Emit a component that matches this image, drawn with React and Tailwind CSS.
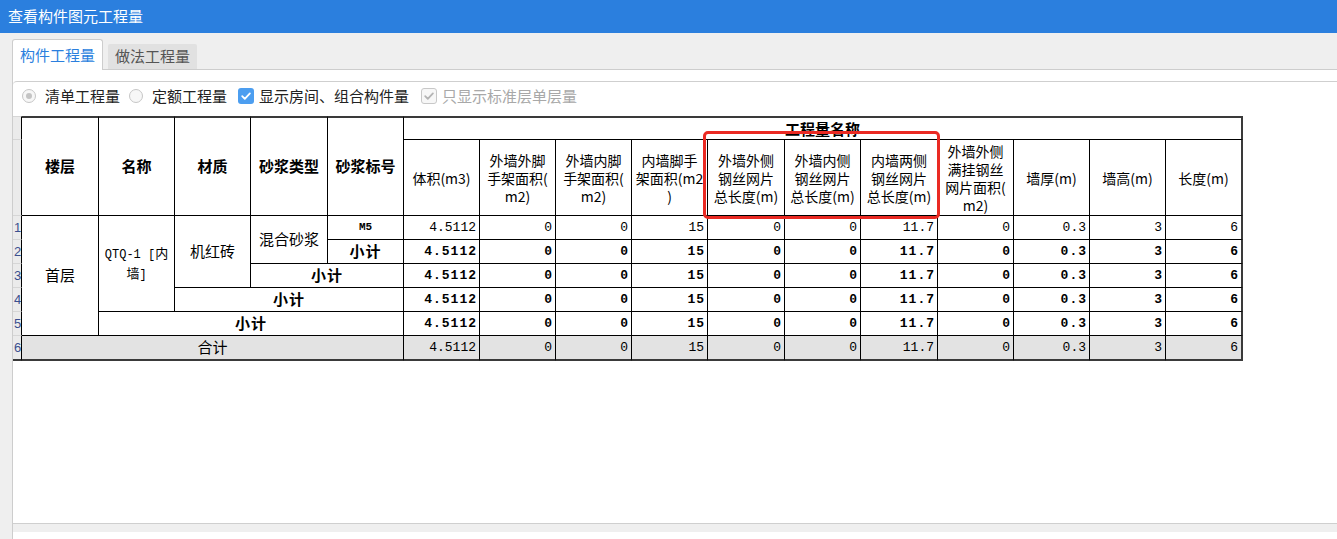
import clsx from "clsx";

const widths = [77, 76, 76, 77, 76, 76, 76, 76, 76, 77, 76, 77, 76, 76, 76, 76];

const values = ["4.5112", "0", "0", "15", "0", "0", "11.7", "0", "0.3", "3", "6"];

const subHeaders = [
  ["体积(m3)"],
  ["外墙外脚", "手架面积(", "m2)"],
  ["外墙内脚", "手架面积(", "m2)"],
  ["内墙脚手", "架面积(m2", ")"],
  ["外墙外侧", "钢丝网片", "总长度(m)"],
  ["外墙内侧", "钢丝网片", "总长度(m)"],
  ["内墙两侧", "钢丝网片", "总长度(m)"],
  ["外墙外侧", "满挂钢丝", "网片面积(", "m2)"],
  ["墙厚(m)"],
  ["墙高(m)"],
  ["长度(m)"],
];

const cell = "border-r border-b border-black p-0 align-middle";
const rnCell =
  "border-r border-b border-r-black border-b-[#d6d6d6] bg-[#ebebeb] p-0 pl-[1px] text-left align-middle text-[13px] leading-none text-[#3a4f8f] font-['Liberation_Sans',sans-serif]";

function Values({ bold }) {
  return values.map((v, i) => (
    <td
      key={i}
      className={clsx(
        cell,
        "text-right font-['Liberation_Mono',monospace] text-[13px] leading-none",
        bold ? "font-bold tracking-[1px] pr-[2px]" : "pr-[3px]",
        i === 10 && "border-r-2 border-r-[#3a3a3a]"
      )}
    >
      {v}
    </td>
  ));
}

function Radio({ checked }) {
  return (
    <span className="flex h-[14px] w-[14px] items-center justify-center rounded-full border border-[#c6c6c6] bg-[#f7f7f7]">
      {checked && <span className="h-[6px] w-[6px] rounded-full bg-[#c4c4c4]" />}
    </span>
  );
}

function Checkbox({ disabled }) {
  return (
    <span
      className={clsx(
        "flex h-[16px] w-[16px] items-center justify-center rounded-[3px]",
        disabled ? "border border-[#c8c8c8] bg-[#f7f7f7]" : "bg-[#4c9ef0]"
      )}
    >
      <svg width="12" height="12" viewBox="0 0 12 12" fill="none">
        <path
          d="M2.2 6.2l2.6 2.6L9.9 3.4"
          stroke={disabled ? "#b4b4b4" : "#ffffff"}
          strokeWidth="1.8"
          strokeLinecap="round"
          strokeLinejoin="round"
        />
      </svg>
    </span>
  );
}

function QuantityTable() {
  return (
    <div className="relative mt-[6px] w-fit">
      <table className="table-fixed border-separate border-spacing-0 text-black" style={{ width: 1230 }}>
        <colgroup>
          <col style={{ width: 9 }} />
          {widths.map((w, i) => (
            <col key={i} style={{ width: i === 15 ? w + 1 : w }} />
          ))}
        </colgroup>
        <thead>
          <tr className="h-[24px]">
            <td className={clsx(rnCell, "border-t border-t-[#d6d6d6]")} />
            {["楼层", "名称", "材质", "砂浆类型", "砂浆标号"].map((h) => (
              <td
                key={h}
                rowSpan={2}
                className={clsx(cell, "border-t-2 border-t-[#3a3a3a] text-center text-[15px] font-bold")}
              >
                {h}
              </td>
            ))}
            <td
              colSpan={11}
              className={clsx(
                cell,
                "border-t-2 border-t-[#3a3a3a] border-r-2 border-r-[#3a3a3a] text-center text-[15px] font-bold leading-none"
              )}
            >
              工程量名称
            </td>
          </tr>
          <tr className="h-[76px]">
            <td className={rnCell} />
            {subHeaders.map((lines, i) => (
              <td
                key={i}
                className={clsx(
                  cell,
                  "text-center text-[14px] leading-[18px] whitespace-nowrap",
                  i === 10 && "border-r-2 border-r-[#3a3a3a]"
                )}
              >
                {lines.map((l, j) => (
                  <div key={j}>{l}</div>
                ))}
              </td>
            ))}
          </tr>
        </thead>
        <tbody className="text-[15px]">
          <tr className="h-[24px]">
            <td className={rnCell}>1</td>
            <td rowSpan={5} className={clsx(cell, "text-center")}>首层</td>
            <td rowSpan={4} className={clsx(cell, "text-center text-[13px] leading-[17px]")}>
              <span className="font-['Liberation_Mono','Noto_Sans_CJK_SC',monospace] text-[12px]">QTQ-1 [</span>内
              <br />墙<span className="font-['Liberation_Mono',monospace] text-[12px]">]</span>
            </td>
            <td rowSpan={3} className={clsx(cell, "text-center")}>机红砖</td>
            <td rowSpan={2} className={clsx(cell, "text-center")}>混合砂浆</td>
            <td className={clsx(cell, "text-center font-['Liberation_Mono',monospace] text-[11px] font-bold")}>M5</td>
            <Values />
          </tr>
          <tr className="h-[24px]">
            <td className={rnCell}>2</td>
            <td className={clsx(cell, "text-center font-bold tracking-[1px]")}>小计</td>
            <Values bold />
          </tr>
          <tr className="h-[24px]">
            <td className={rnCell}>3</td>
            <td colSpan={2} className={clsx(cell, "text-center font-bold tracking-[1px]")}>小计</td>
            <Values bold />
          </tr>
          <tr className="h-[24px]">
            <td className={rnCell}>4</td>
            <td colSpan={3} className={clsx(cell, "text-center font-bold tracking-[1px]")}>小计</td>
            <Values bold />
          </tr>
          <tr className="h-[24px]">
            <td className={rnCell}>5</td>
            <td colSpan={4} className={clsx(cell, "text-center font-bold tracking-[1px]")}>小计</td>
            <Values bold />
          </tr>
          <tr className="h-[22px] bg-[#e3e3e3] [&>td]:border-b-2 [&>td]:border-b-[#3a3a3a]">
            <td className={clsx(rnCell, "bg-[#e3e3e3]")}>6</td>
            <td colSpan={5} className={clsx(cell, "text-center")}>合计</td>
            <Values />
          </tr>
        </tbody>
      </table>

      {/* red highlight */}
      <div className="pointer-events-none absolute left-[690px] top-[15px] h-[88px] w-[237px] rounded-[5px] border-[3px] border-[#ea2a23]" />
    </div>
  );
}

export default function App() {
  return (
    <div className="h-[539px] w-[1337px] overflow-hidden bg-[#efefef] font-['Noto_Sans_CJK_SC',sans-serif] text-[#222]">
      {/* TITLE BAR */}
      <div className="flex h-[33px] items-center bg-[#2b7fde] pl-[8px] text-[15px] text-white">
        查看构件图元工程量
      </div>

      {/* TABS */}
      <div className="flex h-[36px] items-end gap-[5px] pl-[12px]">
        <div className="relative z-10 -mb-px flex h-[31px] w-[91px] items-center justify-center rounded-t-[3px] border border-b-0 border-[#cdcdcd] bg-white text-[15px] text-[#2b7fde]">
          构件工程量
        </div>
        <div className="flex h-[25px] w-[89px] items-center justify-center rounded-t-[2px] bg-[#e1e1e1] text-[15px] text-[#555]">
          做法工程量
        </div>
      </div>

      {/* PANEL */}
      <div className="ml-[12px] flex h-[470px] flex-col border-l border-t border-[#cdcdcd] bg-white pt-[11px]">
        <div className="h-[443px] rounded-tl-[4px] border-b border-t border-[#cfcfcf]">
          {/* OPTIONS */}
          <div className="flex h-[28px] items-center pl-[9px] text-[15px]">
            <Radio checked />
            <span className="ml-[9px]">清单工程量</span>
            <span className="ml-[9px]">
              <Radio />
            </span>
            <span className="ml-[9px]">定额工程量</span>
            <span className="ml-[11px]">
              <Checkbox />
            </span>
            <span className="ml-[5px]">显示房间、组合构件量</span>
            <span className="ml-[12px]">
              <Checkbox disabled />
            </span>
            <span className="ml-[5px] text-[#a8a8a8]">只显示标准层单层量</span>
          </div>

          <QuantityTable />
        </div>
        <div className="h-[8px] bg-[#efefef]" />
      </div>
    </div>
  );
}
